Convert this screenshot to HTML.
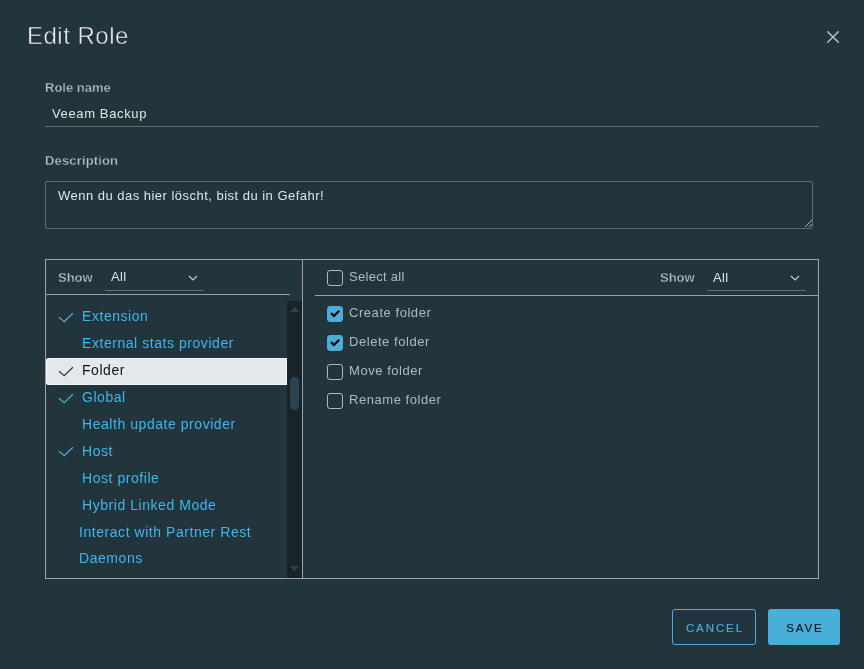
<!DOCTYPE html>
<html><head><meta charset="utf-8">
<style>
html,body{margin:0;padding:0;}
body{width:864px;height:669px;overflow:hidden;background:#22343c;font-family:"Liberation Sans",sans-serif;position:relative;}
.a{position:absolute;white-space:nowrap;will-change:transform;}
.t14{font-size:14px;line-height:20px;}
.title{left:26.5px;top:21px;font-size:24px;line-height:30px;color:#f0f3f5;letter-spacing:0.5px;-webkit-text-stroke:0.5px #22343c;paint-order:normal;}
.lbl{font-size:13px;line-height:16px;font-weight:bold;color:#b3c0c8;-webkit-text-stroke:0.3px #22343c;}
.hr{position:absolute;height:1px;}
.blue{color:#49afd9;}
.li{left:82px;font-size:14px;line-height:20px;letter-spacing:0.55px;color:#3bb8ef;}
.chk{position:absolute;left:58px;width:16px;height:11px;}
.cb{position:absolute;left:327px;width:14px;height:14px;border:1px solid #acbac3;border-radius:3px;box-sizing:content-box;}
.cb.on{background:#49afd9;border-color:#49afd9;}
.ri{left:349px;font-size:13px;line-height:20px;letter-spacing:0.55px;color:#adbbc4;}
</style></head><body>

<div class="a title">Edit Role</div>
<svg class="a" style="left:826px;top:30px" width="14" height="14" viewBox="0 0 14 14"><path d="M1.7 1.7L12.3 12.3M12.3 1.7L1.7 12.3" stroke="#b9c6cd" stroke-width="1.4" stroke-linecap="round"/></svg>

<div class="a lbl" style="left:45px;top:80px">Role name</div>
<div class="a t14" style="left:51.5px;top:104px;font-size:13px;letter-spacing:0.63px;color:#dfe5e8">Veeam Backup</div>
<div class="hr" style="left:45px;top:126px;width:774px;background:#6b6b6b"></div>

<div class="a lbl" style="left:45px;top:153px;letter-spacing:0.15px">Description</div>
<div class="a" style="left:45px;top:181px;width:766px;height:46px;border:1px solid #686868;border-radius:2px"></div>
<div class="a t14" style="left:58px;top:185.5px;font-size:13px;letter-spacing:0.48px;color:#dfe5e8">Wenn du das hier löscht, bist du in Gefahr!</div>
<svg class="a" style="left:803.5px;top:219px" width="9" height="9" viewBox="0 0 9 9"><path d="M1 8L8 1M5 8L8 5" stroke="#aab1b5" stroke-width="1"/></svg>

<!-- panel box -->
<div class="a" style="left:45px;top:259px;width:772px;height:318px;border:1px solid #a1a1a1"></div>
<div class="a" style="left:302px;top:259px;width:1px;height:320px;background:#a1a1a1"></div>

<!-- left header -->
<div class="a lbl" style="left:58px;top:269.5px">Show</div>
<div class="a t14" style="left:111px;top:267.3px;font-size:13px;letter-spacing:0.3px;color:#dfe5e8">All</div>
<svg class="a" style="left:188px;top:273.5px" width="10" height="8" viewBox="0 0 10 8"><path d="M1 2L5 6L9 2" fill="none" stroke="#c6c8c9" stroke-width="1.2"/></svg>
<div class="hr" style="left:105px;top:290px;width:99px;background:#6b6b6b"></div>
<div class="hr" style="left:45px;top:294px;width:245px;background:#a1a1a1"></div>

<!-- scrollbar -->
<div class="a" style="left:287px;top:301px;width:15px;height:277px;background:#18242a"></div>
<svg class="a" style="left:289px;top:306px" width="11" height="7" viewBox="0 0 11 7"><path d="M1 6L5.5 1L10 6Z" fill="#2d4452"/></svg>
<svg class="a" style="left:289px;top:565px" width="11" height="7" viewBox="0 0 11 7"><path d="M1 1L5.5 6L10 1Z" fill="#2d4452"/></svg>
<div class="a" style="left:290px;top:377px;width:9px;height:33px;background:#2c4351;border-radius:5px"></div>

<!-- selected row -->
<div class="a" style="left:46px;top:358px;width:241px;height:27px;background:#e3e8eb;border-radius:3px 0 0 3px;box-shadow:inset 0 0 0 1px #f3f5f6"></div>

<!-- list items -->
<svg class="chk" style="top:312px" viewBox="0 0 16 11"><path d="M1 5.2L6.2 9.6L14.9 1.2" fill="none" stroke="#49afd9" stroke-width="1.2"/></svg>
<div class="a li" style="left:82px;top:306px">Extension</div>
<div class="a li" style="left:82px;top:333px">External stats provider</div>
<svg class="chk" style="top:366px" viewBox="0 0 16 11"><path d="M1 5.2L6.2 9.6L14.9 1.2" fill="none" stroke="#333" stroke-width="1.2"/></svg>
<div class="a li" style="left:82px;top:360px;color:#121212">Folder</div>
<svg class="chk" style="top:393px" viewBox="0 0 16 11"><path d="M1 5.2L6.2 9.6L14.9 1.2" fill="none" stroke="#49afd9" stroke-width="1.2"/></svg>
<div class="a li" style="left:82px;top:387px">Global</div>
<div class="a li" style="left:82px;top:414px">Health update provider</div>
<svg class="chk" style="top:446px" viewBox="0 0 16 11"><path d="M1 5.2L6.2 9.6L14.9 1.2" fill="none" stroke="#49afd9" stroke-width="1.2"/></svg>
<div class="a li" style="left:82px;top:440.5px">Host</div>
<div class="a li" style="left:82px;top:468px">Host profile</div>
<div class="a li" style="left:82px;top:494.5px">Hybrid Linked Mode</div>
<div class="a li" style="left:79px;top:522px">Interact with Partner Rest</div>
<div class="a li" style="left:79px;top:548px">Daemons</div>

<!-- right header -->
<div class="cb" style="top:270px"></div>
<div class="a ri" style="top:267px;letter-spacing:0.3px">Select all</div>
<div class="a lbl" style="left:660px;top:269.7px">Show</div>
<div class="a t14" style="left:713px;top:267.7px;font-size:13px;letter-spacing:0.3px;color:#dfe5e8">All</div>
<svg class="a" style="left:790px;top:273.5px" width="10" height="8" viewBox="0 0 10 8"><path d="M1 2L5 6L9 2" fill="none" stroke="#c6c8c9" stroke-width="1.2"/></svg>
<div class="hr" style="left:707px;top:290px;width:99px;background:#6b6b6b"></div>
<div class="hr" style="left:315px;top:295px;width:503px;background:#a1a1a1"></div>

<!-- right items -->
<div class="cb on" style="top:306px"><svg width="14" height="14" viewBox="0 0 14 14" style="display:block"><path d="M3 6.2L5.9 9L11.2 3.8" fill="none" stroke="#000" stroke-width="2.3"/></svg></div>
<div class="a ri" style="top:303px">Create folder</div>
<div class="cb on" style="top:335px"><svg width="14" height="14" viewBox="0 0 14 14" style="display:block"><path d="M3 6.2L5.9 9L11.2 3.8" fill="none" stroke="#000" stroke-width="2.3"/></svg></div>
<div class="a ri" style="top:332px">Delete folder</div>
<div class="cb" style="top:364px"></div>
<div class="a ri" style="top:361px">Move folder</div>
<div class="cb" style="top:393px"></div>
<div class="a ri" style="top:390px">Rename folder</div>

<!-- buttons -->
<div class="a" style="left:672px;top:609px;width:82px;height:34px;border:1px solid #49afd9;border-radius:3px"></div>
<div class="a" style="left:672px;top:620px;width:84px;box-sizing:border-box;padding-left:1.9px;text-align:center;font-size:11.5px;-webkit-text-stroke:0.15px #49afd9;line-height:16px;letter-spacing:1.9px;color:#49afd9">CANCEL</div>
<div class="a" style="left:768px;top:609px;width:72px;height:36px;background:#49afd9;border-radius:3px"></div>
<div class="a" style="left:768px;top:620px;width:72px;box-sizing:border-box;padding-left:1.9px;text-align:center;font-size:11.5px;-webkit-text-stroke:0.15px #0a1318;line-height:16px;letter-spacing:1.9px;color:#0a1318">SAVE</div>

</body></html>
